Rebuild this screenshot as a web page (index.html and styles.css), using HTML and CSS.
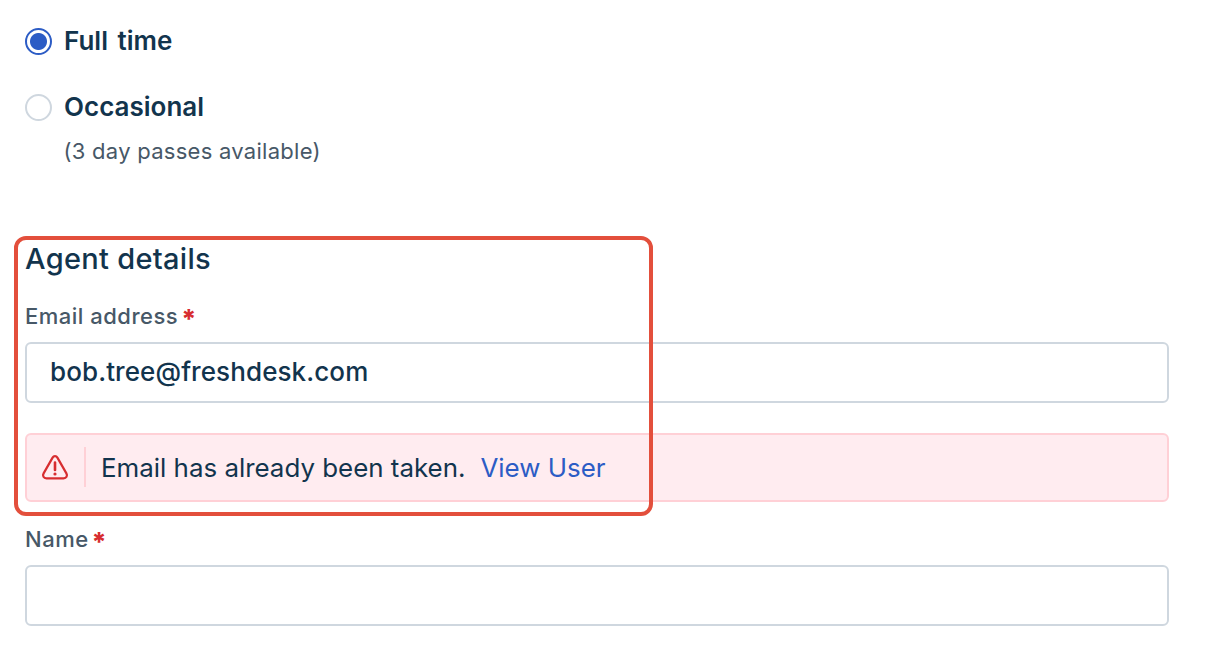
FILE: index.html
```html
<!DOCTYPE html>
<html lang="en">
<head>
  <meta charset="UTF-8" />
  <title>Agent details</title>
  <link rel="stylesheet" href="styles.css">
</head>
<body>
  <div class="page">
    <div class="radio-row">
      <span class="radio checked"></span>
      <span class="radio-label">Full time</span>
    </div>
    <div class="radio-row second">
      <span class="radio"></span>
      <span class="radio-label">Occasional</span>
    </div>
    <p class="radio-hint">(3 day passes available)</p>

    <h2>Agent details</h2>

    <label class="field-label">Email address<span class="req">*</span></label>
    <div class="input">bob.tree@freshdesk.com</div>

    <div class="alert">
      <span class="alert-icon">
        <svg width="28" height="26" viewBox="0 0 28 26" fill="none">
          <path d="M11.6 3.6 2.6 19.4C1.2 21.8 2.7 24.4 5.4 24.4h17.2c2.7 0 4.2-2.6 2.8-5L16.4 3.6c-1.1-1.9-3.7-1.9-4.8 0Z" stroke="#d72d30" stroke-width="2.2" stroke-linejoin="round"/>
          <path d="M14 8.5v7.5" stroke="#d72d30" stroke-width="2.6" stroke-linecap="round"/>
          <circle cx="14" cy="20" r="1.6" fill="#d72d30"/>
        </svg>
      </span>
      <span class="alert-text">Email has already been taken.</span>
      <a class="alert-link" href="#">View User</a>
    </div>

    <label class="field-label name">Name<span class="req">*</span></label>
    <div class="input"></div>

    <div class="highlight"></div>
  </div>
</body>
</html>
```

FILE: styles.css
```css
html, body {
  margin: 0;
  height: 100%;
  overflow: hidden;
  background: #fff;
}

body {
  font-family: Inter, "Liberation Sans", sans-serif;
  color: #12344d;
}

.page {
  position: relative;
  height: 663px;
  padding: 25px 55px 0 25px;
  box-sizing: border-box;
}

.radio-row {
  display: flex;
  align-items: center;
  gap: 12px;
  height: 32px;
}

.radio-row.second {
  margin-top: 34px;
}

.radio {
  width: 27px;
  height: 27px;
  box-sizing: border-box;
  border: 2px solid #cfd7df;
  border-radius: 50%;
  background: #fff;
}

.radio.checked {
  border-color: #2c5cc5;
  background: radial-gradient(circle, #2c5cc5 0 8px, #fff 9px);
}

.radio-label {
  padding-bottom: 2px;
  font-size: 26px;
  font-weight: 600;
  word-spacing: 3px;
}

.radio-hint {
  margin: 14px 0 0 38.5px;
  font-size: 22px;
  letter-spacing: 0.27px;
  line-height: 28px;
  color: #475867;
}

h2 {
  margin: 76px 0 0;
  font-size: 29px;
  font-weight: 500;
  letter-spacing: 0.3px;
  line-height: 36px;
}

.field-label {
  display: block;
  margin-top: 25px;
  font-size: 22px;
  font-weight: 500;
  letter-spacing: 0.5px;
  line-height: 28px;
  color: #475867;
}

.field-label.name {
  margin-top: 23px;
}

.req {
  display: inline-block;
  margin-left: 3px;
  height: 28px;
  color: #d72d30;
  font-size: 26px;
  font-weight: 800;
  line-height: 34px;
  vertical-align: top;
}

.input {
  height: 61px;
  box-sizing: border-box;
  margin-top: 12px;
  padding: 0 23px;
  border: 2px solid #cfd7df;
  border-radius: 6px;
  background: #fff;
  font-size: 26px;
  font-weight: 500;
  letter-spacing: 0.1px;
  line-height: 55px;
}

.alert {
  display: flex;
  align-items: center;
  height: 69px;
  box-sizing: border-box;
  margin-top: 30px;
  padding-bottom: 1px;
  border: 2px solid #ffd0d6;
  border-radius: 6px;
  background: #ffecf0;
  font-size: 25.9px;
}

.alert-icon {
  display: flex;
  align-items: center;
  height: 40px;
  padding: 0 15px 0 14px;
  border-right: 2px solid #ffd0d6;
}

.alert-text {
  margin-left: 15px;
}

.alert-link {
  margin-left: 15px;
  color: #2c5cc5;
  text-decoration: none;
}

.highlight {
  position: absolute;
  left: 14px;
  top: 236px;
  width: 639px;
  height: 280px;
  box-sizing: border-box;
  border: 4px solid #e34f3c;
  border-radius: 12px;
}
```
